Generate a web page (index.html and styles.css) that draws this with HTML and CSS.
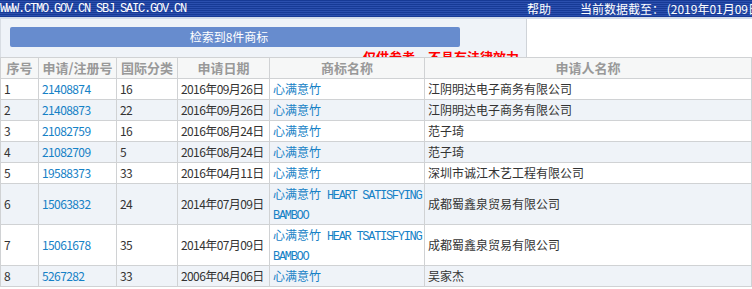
FILE: index.html
```html
<!DOCTYPE html>
<html lang="zh-CN">
<head>
<meta charset="utf-8">
<title>商标检索结果</title>
<link rel="stylesheet" href="styles.css">
</head>
<body>
<div class="topbar">
  <span class="site">WWW.CTMO.GOV.CN SBJ.SAIC.GOV.CN</span>
  <span class="help">帮助</span>
  <span class="date">当前数据截至： (2019年01月09日)</span>
</div>
<div class="panel">
  <div class="btn">检索到8件商标</div>
  <div class="warn">仅供参考，不具有法律效力</div>
</div>
<table class="result">
  <colgroup>
    <col class="c1"><col class="c2"><col class="c3"><col class="c4"><col class="c5"><col class="c6">
  </colgroup>
  <thead>
    <tr><th>序号</th><th>申请/注册号</th><th>国际分类</th><th>申请日期</th><th>商标名称</th><th>申请人名称</th></tr>
  </thead>
  <tbody>
    <tr><td>1</td><td><a class="num">21408874</a></td><td class="n">16</td><td class="d">2016年09月26日</td><td><a>心满意竹</a></td><td>江阴明达电子商务有限公司</td></tr>
    <tr><td>2</td><td><a class="num">21408873</a></td><td class="n">22</td><td class="d">2016年09月26日</td><td><a>心满意竹</a></td><td>江阴明达电子商务有限公司</td></tr>
    <tr><td>3</td><td><a class="num">21082759</a></td><td class="n">16</td><td class="d">2016年08月24日</td><td><a>心满意竹</a></td><td>范子琦</td></tr>
    <tr><td>4</td><td><a class="num">21082709</a></td><td class="n">5</td><td class="d">2016年08月24日</td><td><a>心满意竹</a></td><td>范子琦</td></tr>
    <tr><td>5</td><td><a class="num">19588373</a></td><td class="n">33</td><td class="d">2016年04月11日</td><td><a>心满意竹</a></td><td>深圳市诚江木艺工程有限公司</td></tr>
    <tr><td>6</td><td><a class="num">15063832</a></td><td class="n">24</td><td class="d">2014年07月09日</td><td class="tm"><a>心满意竹<span class="en"> HEART SATISFYING BAMBOO</span></a></td><td>成都蜀鑫泉贸易有限公司</td></tr>
    <tr><td>7</td><td><a class="num">15061678</a></td><td class="n">35</td><td class="d">2014年07月09日</td><td class="tm"><a>心满意竹<span class="en"> HEAR TSATISFYING BAMBOO</span></a></td><td>成都蜀鑫泉贸易有限公司</td></tr>
    <tr><td>8</td><td><a class="num">5267282</a></td><td class="n">33</td><td class="d">2006年04月06日</td><td><a>心满意竹</a></td><td>吴家杰</td></tr>
  </tbody>
</table>
</body>
</html>
```
FILE: styles.css
```css
html, body {
  margin: 0;
  padding: 0;
  background: #ffffff;
  font-family: "Noto Sans CJK SC", "Liberation Sans", sans-serif;
  font-size: 12px;
  color: #333333;
  overflow: hidden;
}

.topbar {
  display: flex;
  align-items: center;
  height: 17px;
  background: repeating-linear-gradient(to bottom, #173a96 0px, #173a96 1px, #2b4fae 1px, #2b4fae 2px);
  border-bottom: 2px solid #d3dcea;
  color: #ffffff;
  white-space: nowrap;
  overflow: hidden;
}

.site {
  flex: none;
  width: 527px;
  font-family: "Liberation Mono", monospace;
  font-size: 12px;
  letter-spacing: -1.2px;
}

.help {
  flex: none;
  width: 53px;
}

.date {
  flex: none;
}

.panel {
  box-sizing: border-box;
  width: 527px;
  height: 38px;
  padding: 8px 0 0 9px;
  background: #eff3f8;
  border-left: 1px solid #d8dde3;
  border-right: 1px solid #cfd3d8;
  overflow: hidden;
}

.btn {
  box-sizing: border-box;
  width: 450px;
  height: 20px;
  line-height: 20px;
  padding-right: 12px;
  background: #678cce;
  border-radius: 2px;
  color: #ffffff;
  text-align: center;
  font-size: 12px;
}

.warn {
  margin: 2px 0 0 353px;
  color: #ff0000;
  font-weight: bold;
  font-size: 13px;
  line-height: 16px;
  white-space: nowrap;
}

.result {
  border-collapse: collapse;
  table-layout: fixed;
  width: 751px;
}

.c1 { width: 38px; }
.c2 { width: 78px; }
.c3 { width: 61px; }
.c4 { width: 92px; }
.c5 { width: 155px; }
.c6 { width: 327px; }

.result th,
.result td {
  border: 1px solid #d0d2d4;
  padding: 0 1px 0 3px;
  line-height: 20px;
  height: 20px;
  vertical-align: middle;
  text-align: left;
  overflow: hidden;
  white-space: nowrap;
}

.result td.tm {
  white-space: normal;
  vertical-align: top;
  padding-right: 0;
}

.result td.d,
.result td.n,
.result .num {
  letter-spacing: -0.6px;
}

.result th {
  background: #f6f7f7;
  color: #999999;
  font-weight: bold;
  font-size: 13px;
  text-align: center;
  padding: 0;
}

.result tbody tr:nth-child(even) td {
  background: #eff3f8;
}

.result a {
  color: #1581c6;
  text-decoration: none;
}

.en {
  font-family: "Liberation Mono", monospace;
  letter-spacing: -1.3px;
  line-height: 12px;
}
```
